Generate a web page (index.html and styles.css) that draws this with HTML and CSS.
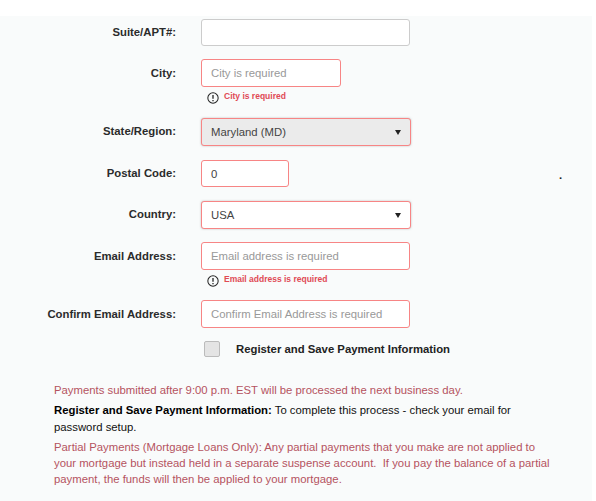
FILE: index.html
```html
<!DOCTYPE html>
<html lang="en">
<head>
    <meta charset="UTF-8">
    <meta name="viewport" content="width=device-width, initial-scale=1.0">
    <title>Payment Information</title>
    <link rel="stylesheet" href="styles.css">
</head>
<body class="page">
    <div class="panel">
        <form class="form">
            <div class="row row--suite">
                <label class="row__label">Suite/APT#:</label>
                <input class="field field--wide" type="text">
            </div>

            <div class="row row--city">
                <label class="row__label row__label--low">City:</label>
                <div class="row__control">
                    <input class="field field--city field--error" type="text" placeholder="City is required">
                    <p class="error">
                        <svg class="error__ico" xmlns="http://www.w3.org/2000/svg" width="12" height="12" viewBox="0 0 13 13" fill="none" stroke="#222" stroke-width="1.1"><circle cx="6.5" cy="6.5" r="5.6"></circle><line x1="6.5" y1="3.2" x2="6.5" y2="7.4" stroke-width="1.4"></line><line x1="6.5" y1="8.6" x2="6.5" y2="9.9" stroke-width="1.4"></line></svg>
                        <span>City is required</span>
                    </p>
                </div>
            </div>

            <div class="row row--state">
                <label class="row__label">State/Region:</label>
                <div class="select">
                    <select class="field field--select field--error field--disabled">
                        <option>Maryland (MD)</option>
                    </select>
                </div>
            </div>

            <div class="row row--postal">
                <label class="row__label">Postal Code:</label>
                <input class="field field--postal field--error" type="text" value="0">
                <span class="row__dot">.</span>
            </div>

            <div class="row row--country">
                <label class="row__label">Country:</label>
                <div class="select">
                    <select class="field field--select field--error">
                        <option>USA</option>
                    </select>
                </div>
            </div>

            <div class="row row--email">
                <label class="row__label row__label--low">Email Address:</label>
                <div class="row__control">
                    <input class="field field--wide field--tall field--error" type="text" placeholder="Email address is required">
                    <p class="error">
                        <svg class="error__ico" xmlns="http://www.w3.org/2000/svg" width="12" height="12" viewBox="0 0 13 13" fill="none" stroke="#222" stroke-width="1.1"><circle cx="6.5" cy="6.5" r="5.6"></circle><line x1="6.5" y1="3.2" x2="6.5" y2="7.4" stroke-width="1.4"></line><line x1="6.5" y1="8.6" x2="6.5" y2="9.9" stroke-width="1.4"></line></svg>
                        <span>Email address is required</span>
                    </p>
                </div>
            </div>

            <div class="row row--confirm">
                <label class="row__label row__label--low">Confirm Email Address:</label>
                <input class="field field--wide field--tall field--error" type="text" placeholder="Confirm Email Address is required">
            </div>

            <div class="save">
                <span class="save__box"></span>
                <span class="save__text">Register and Save Payment Information</span>
            </div>
        </form>

        <div class="notes">
            <p class="notes__item notes__item--warn">Payments submitted after 9:00 p.m. EST will be processed the next business day.</p>
            <p class="notes__item"><b class="notes__bold">Register and Save Payment Information:</b> To complete this process - check your email for password setup.</p>
            <p class="notes__item notes__item--warn">Partial Payments (Mortgage Loans Only): Any partial payments that you make are not applied to your mortgage but instead held in a separate suspense account.&nbsp; If you pay the balance of a partial payment, the funds will then be applied to your mortgage.</p>
        </div>
    </div>
</body>
</html>
```

FILE: styles.css
```css
body{
    font-family: "Liberation Sans", Arial, sans-serif;
    font-size: 11.33px;
    margin: 0;
    background: #fff;
    color: #222;
}
*, ::after, ::before {
    box-sizing: border-box;
}
p{
    margin: 0;
}
.page{
    padding-top: 16px;
}
.panel{
    width: 592px;
    height: 485px;
    padding-top: 3px;
    background: #f9fbfb;
    overflow: hidden;
}
.row{
    display: flex;
    align-items: flex-start;
}
.row--city{
    margin-top: 13px;
}
.row--state{
    margin-top: 15px;
}
.row--postal{
    height: 27px;
    margin-top: 14px;
}
.row--country{
    margin-top: 14px;
}
.row--email{
    margin-top: 13px;
}
.row--confirm{
    margin-top: 14px;
}
.row__label{
    width: 176px;
    margin-right: 25px;
    flex-shrink: 0;
    text-align: right;
    font-weight: bold;
    line-height: 26px;
    color: #2b2b2b;
}
.row__label--low{
    line-height: 28px;
}
.row__dot{
    margin-left: 270px;
    font-weight: bold;
    line-height: 30px;
}
.field{
    display: block;
    height: 27px;
    padding: 0 9px;
    border: 1px solid #ccc;
    border-radius: 3px;
    background: #fff;
    font-family: inherit;
    font-size: 11.33px;
    color: #444;
    outline: none;
}
.field::placeholder{
    color: #999;
    opacity: 1;
}
.field--wide{
    width: 209px;
}
.field--tall{
    height: 28px;
}
.field--city{
    width: 140px;
    height: 28px;
}
.field--postal{
    width: 88px;
}
.field--error{
    border-color: #f78585;
}
.field--select{
    width: 210px;
    height: 28px;
    appearance: none;
    box-shadow: 0 0 2px rgba(120, 120, 120, .5);
}
.field--disabled{
    background: #ebebeb;
}
.select{
    position: relative;
}
.select::after{
    content: "";
    position: absolute;
    top: 12px;
    right: 10px;
    border-top: 5px solid #222;
    border-left: 3px solid transparent;
    border-right: 3px solid transparent;
}
.error{
    display: flex;
    align-items: flex-start;
    gap: 5px;
    margin: 3px 0 0 6px;
    height: 13px;
    font-size: 8.5px;
    font-weight: bold;
    line-height: 12px;
    color: #e04a55;
}
.error__ico{
    flex-shrink: 0;
    margin-top: 2px;
}
.save{
    display: flex;
    align-items: center;
    margin: 13px 0 0 204px;
}
.save__box{
    width: 16px;
    height: 16px;
    margin-right: 16px;
    border: 1px solid #bbb;
    border-radius: 2px;
    background: #e4e4e4;
}
.save__text{
    font-weight: bold;
    color: #222;
}
.notes{
    margin: 25px 0 0 54px;
    width: 502px;
    line-height: 16.3px;
    color: #111;
}
.notes__item{
    margin-bottom: 4px;
}
.notes__item--warn{
    color: #b5535f;
}
.notes__bold{
    color: #000;
}
```
